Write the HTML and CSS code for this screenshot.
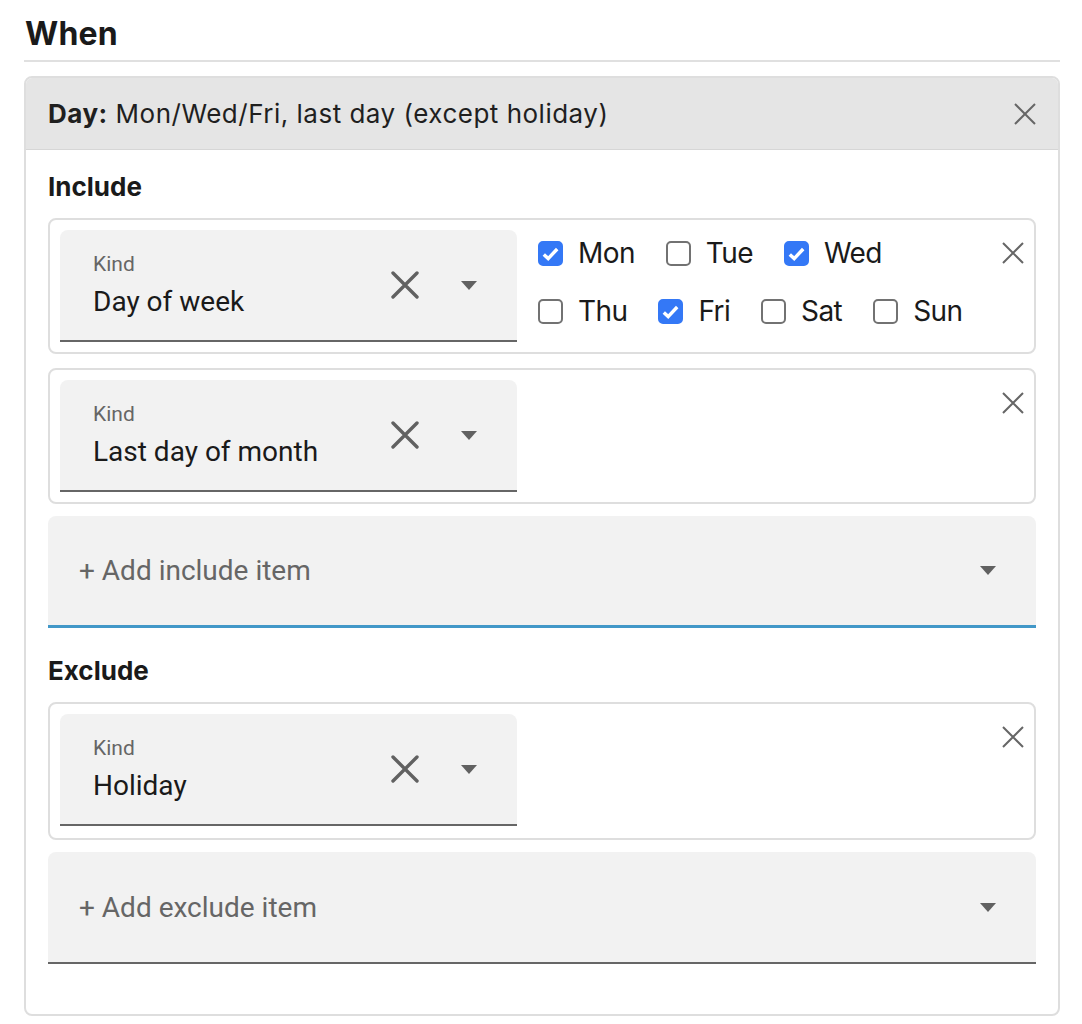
FILE: index.html
```html
<!DOCTYPE html>
<html lang="en">
<head>
    <meta charset="UTF-8">
    <meta name="viewport" content="width=device-width, initial-scale=1.0">
    <title>Schedule rule</title>
    <link rel="stylesheet" href="styles.css">
</head>
<body>
    <section class="when">
        <h2 class="when-title">When</h2>

        <div class="rule-card">
            <!-- Summary bar -->
            <div class="rule-header">
                <div class="rule-summary"><b>Day:</b> Mon/Wed/Fri, last day (except holiday)</div>
                <button class="icon-btn header-close" title="Remove rule">
                    <svg width="24" height="24" viewBox="0 0 24 24"><path d="M2 2L22 22M22 2L2 22" stroke="#666" stroke-width="2" fill="none"/></svg>
                </button>
            </div>

            <div class="rule-body">
                <!-- Include -->
                <h3 class="group-title">Include</h3>

                <div class="item">
                    <div class="select-field">
                        <div class="select-text">
                            <span class="select-label">Kind</span>
                            <span class="select-value">Day of week</span>
                        </div>
                        <svg class="clear-icon" width="28" height="28" viewBox="0 0 28 28"><path d="M2 2L26 26M26 2L2 26" stroke="#616161" stroke-width="3.4" stroke-linecap="round" fill="none"/></svg>
                        <svg class="caret" width="16" height="9" viewBox="0 0 16 9"><path d="M0 0H16L8 9Z" fill="#616161"/></svg>
                    </div>

                    <div class="days">
                        <div class="day-row">
                            <label class="day"><span class="box checked"><svg width="17" height="14" viewBox="0 0 17 14"><path d="M1.8 7.4L6.2 11.6L15.2 2" stroke="#fff" stroke-width="3.4" fill="none"/></svg></span>Mon</label>
                            <label class="day"><span class="box"></span>Tue</label>
                            <label class="day"><span class="box checked"><svg width="17" height="14" viewBox="0 0 17 14"><path d="M1.8 7.4L6.2 11.6L15.2 2" stroke="#fff" stroke-width="3.4" fill="none"/></svg></span>Wed</label>
                        </div>
                        <div class="day-row">
                            <label class="day"><span class="box"></span>Thu</label>
                            <label class="day"><span class="box checked"><svg width="17" height="14" viewBox="0 0 17 14"><path d="M1.8 7.4L6.2 11.6L15.2 2" stroke="#fff" stroke-width="3.4" fill="none"/></svg></span>Fri</label>
                            <label class="day"><span class="box"></span>Sat</label>
                            <label class="day"><span class="box"></span>Sun</label>
                        </div>
                    </div>

                    <button class="icon-btn item-close" title="Remove">
                        <svg width="24" height="24" viewBox="0 0 24 24"><path d="M2 2L22 22M22 2L2 22" stroke="#666" stroke-width="2" fill="none"/></svg>
                    </button>
                </div>

                <div class="item">
                    <div class="select-field">
                        <div class="select-text">
                            <span class="select-label">Kind</span>
                            <span class="select-value">Last day of month</span>
                        </div>
                        <svg class="clear-icon" width="28" height="28" viewBox="0 0 28 28"><path d="M2 2L26 26M26 2L2 26" stroke="#616161" stroke-width="3.4" stroke-linecap="round" fill="none"/></svg>
                        <svg class="caret" width="16" height="9" viewBox="0 0 16 9"><path d="M0 0H16L8 9Z" fill="#616161"/></svg>
                    </div>
                    <button class="icon-btn item-close" title="Remove">
                        <svg width="24" height="24" viewBox="0 0 24 24"><path d="M2 2L22 22M22 2L2 22" stroke="#666" stroke-width="2" fill="none"/></svg>
                    </button>
                </div>

                <div class="add-field focused">
                    <span class="add-text">+ Add include item</span>
                    <svg class="caret" width="16" height="9" viewBox="0 0 16 9"><path d="M0 0H16L8 9Z" fill="#616161"/></svg>
                </div>

                <!-- Exclude -->
                <h3 class="group-title exclude-title">Exclude</h3>

                <div class="item">
                    <div class="select-field">
                        <div class="select-text">
                            <span class="select-label">Kind</span>
                            <span class="select-value">Holiday</span>
                        </div>
                        <svg class="clear-icon" width="28" height="28" viewBox="0 0 28 28"><path d="M2 2L26 26M26 2L2 26" stroke="#616161" stroke-width="3.4" stroke-linecap="round" fill="none"/></svg>
                        <svg class="caret" width="16" height="9" viewBox="0 0 16 9"><path d="M0 0H16L8 9Z" fill="#616161"/></svg>
                    </div>
                    <button class="icon-btn item-close" title="Remove">
                        <svg width="24" height="24" viewBox="0 0 24 24"><path d="M2 2L22 22M22 2L2 22" stroke="#666" stroke-width="2" fill="none"/></svg>
                    </button>
                </div>

                <div class="add-field">
                    <span class="add-text">+ Add exclude item</span>
                    <svg class="caret" width="16" height="9" viewBox="0 0 16 9"><path d="M0 0H16L8 9Z" fill="#616161"/></svg>
                </div>
            </div>
        </div>
    </section>
</body>
</html>
```

FILE: styles.css
```css
body {
    margin: 0;
    background: #fff;
    font-family: Inter, "Liberation Sans", sans-serif;
    color: #1a1a1a;
}
.when {
    padding: 13px 22px 0 24px;
}
.when-title {
    margin: 0;
    padding: 0 0 6px 1px;
    font-size: 32px;
    line-height: 41px;
    font-weight: 700;
    letter-spacing: 0.2px;
    border-bottom: 2px solid #e0e0e0;
}
.rule-card {
    margin-top: 14px;
    border: 2px solid #dedede;
    border-radius: 8px;
    overflow: hidden;
}
.rule-header {
    display: flex;
    align-items: center;
    height: 71px;
    padding: 0 21px 0 22px;
    background: #e5e5e5;
    border-bottom: 1px solid #d6d6d6;
}
.rule-summary {
    flex: 1;
    font-size: 26px;
    letter-spacing: 0.5px;
    color: #1f1f1f;
}
.rule-summary b {
    font-weight: 700;
}
.icon-btn {
    border: none;
    background: none;
    padding: 0;
    cursor: pointer;
    display: flex;
}
.rule-body {
    padding: 22px 22px 50px 22px;
}
.group-title {
    margin: 0 0 16px;
    font-size: 26px;
    line-height: 30px;
    font-weight: 700;
}
.exclude-title {
    margin-top: 28px;
}
.item {
    display: flex;
    border: 2px solid #dedede;
    border-radius: 8px;
    padding: 10px 9px 10px 10px;
    margin-bottom: 14px;
}
.exclude-title + .item {
    padding-bottom: 12px;
}
.select-field {
    display: flex;
    align-items: center;
    width: 384px;
    height: 110px;
    padding: 0 40px 0 33px;
    background: #f2f2f2;
    border-radius: 8px 8px 0 0;
    border-bottom: 2px solid #666;
    font-family: Roboto, sans-serif;
}
.select-text {
    flex: 1;
    align-self: flex-start;
    padding-top: 24px;
    display: flex;
    flex-direction: column;
}
.select-label {
    font-size: 21px;
    line-height: 21px;
    color: #666;
}
.select-value {
    margin-top: 11px;
    font-size: 28px;
    line-height: 32px;
    color: #1a1a1a;
}
.clear-icon {
    margin-right: 42px;
}
.days {
    padding: 11px 0 0 21px;
    display: flex;
    flex-direction: column;
    gap: 33px;
}
.day-row {
    display: flex;
}
.day {
    display: flex;
    align-items: center;
    margin-right: 31px;
    font-size: 28px;
    line-height: 25px;
    letter-spacing: -0.6px;
    color: #1a1a1a;
}
.box {
    width: 25px;
    height: 25px;
    box-sizing: border-box;
    margin-right: 15px;
    border: 2px solid #727272;
    border-radius: 5px;
    display: flex;
    align-items: center;
    justify-content: center;
}
.box.checked {
    background: #3478f6;
    border-color: #3478f6;
}
.item-close {
    margin-left: auto;
    margin-top: 11px;
    align-self: flex-start;
}
.add-field {
    display: flex;
    align-items: center;
    height: 110px;
    padding: 0 40px 0 31px;
    background: #f2f2f2;
    border-radius: 8px 8px 0 0;
    border-bottom: 2px solid #666;
    margin-top: -2px;
    font-family: Roboto, sans-serif;
}
.add-field.focused {
    border-bottom: 3px solid #4298c8;
    height: 109px;
}
.add-text {
    flex: 1;
    font-size: 28px;
    color: #666;
}
```
